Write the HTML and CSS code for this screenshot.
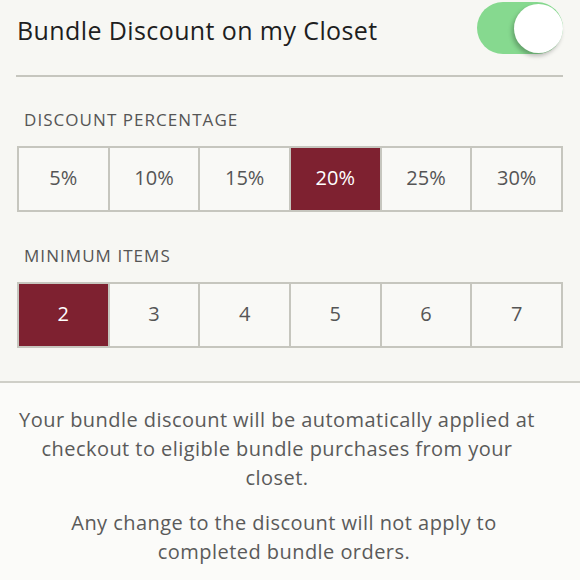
FILE: index.html
```html
<!DOCTYPE html>
<html>
<head>
<meta charset="utf-8">
<link rel="stylesheet" href="styles.css">
</head>
<body>
<section class="settings">
  <div class="header">
    <h1 class="title">Bundle Discount on my Closet</h1>
    <div class="toggle"><span class="knob"></span></div>
  </div>
  <div class="group">
    <div class="label">DISCOUNT PERCENTAGE</div>
    <div class="options">
      <div class="opt">5%</div>
      <div class="opt">10%</div>
      <div class="opt">15%</div>
      <div class="opt selected">20%</div>
      <div class="opt">25%</div>
      <div class="opt">30%</div>
    </div>
  </div>
  <div class="group second">
    <div class="label">MINIMUM ITEMS</div>
    <div class="options">
      <div class="opt selected">2</div>
      <div class="opt">3</div>
      <div class="opt">4</div>
      <div class="opt">5</div>
      <div class="opt">6</div>
      <div class="opt">7</div>
    </div>
  </div>
</section>
<section class="info">
  <p class="lead">Your bundle discount will be automatically applied at checkout to eligible bundle purchases from your closet.</p>
  <p class="note">Any change to the discount will not apply to completed bundle orders.</p>
</section>
</body>
</html>
```
FILE: styles.css
```css
html, body {
  margin: 0;
  padding: 0;
  background: #fbfbf9;
}
body {
  font-family: "Open Sans", "Liberation Sans", sans-serif;
  width: 580px;
  height: 580px;
  overflow: hidden;
}
.settings {
  background: #f7f7f3;
  padding: 0 17px 33px 16px;
  border-bottom: 2px solid #cfcfc8;
}
.header {
  display: flex;
  align-items: center;
  justify-content: space-between;
  height: 75px;
  border-bottom: 2px solid #c6c6be;
}
.title {
  margin: 0;
  font-weight: 400;
  font-size: 25px;
  letter-spacing: 0.4px;
  color: #1e1e1e;
  padding-left: 1px;
  padding-bottom: 16px;
}
.toggle {
  width: 86px;
  height: 52px;
  border-radius: 26px;
  background: #86d98f;
  display: flex;
  justify-content: flex-end;
  align-items: center;
  margin-bottom: 19px;
}
.knob {
  width: 49px;
  height: 49px;
  border-radius: 50%;
  background: #ffffff;
  box-shadow: -2px 3px 4px rgba(0, 0, 0, 0.25);
}
.group {
  padding-top: 33px;
}
.group.second {
  padding-top: 34px;
}
.label {
  font-size: 17px;
  letter-spacing: 1.05px;
  color: #555555;
  padding-left: 8px;
  line-height: 20px;
  margin-bottom: 16px;
}
.options {
  display: grid;
  grid-template-columns: repeat(6, 1fr);
  gap: 2px;
  background: #c6c6be;
  border: 2px solid #c6c6be;
  margin-left: 1px;
}
.opt {
  background: #f9f9f6;
  height: 58px;
  padding-bottom: 4px;
  display: flex;
  align-items: center;
  justify-content: center;
  font-size: 20px;
  color: #555555;
}
.opt.selected {
  background: #7e2130;
  color: #ffffff;
}
.info {
  padding: 22px 14px 0;
  text-align: center;
  color: #5a5a5a;
  font-size: 20px;
  letter-spacing: 0.45px;
  line-height: 29px;
}
.info p {
  margin: 0 0 16px;
}
.info p.lead {
  padding: 0 26px 0 0;
}
.info p.note {
  padding: 0 40px 0 28px;
}
```
